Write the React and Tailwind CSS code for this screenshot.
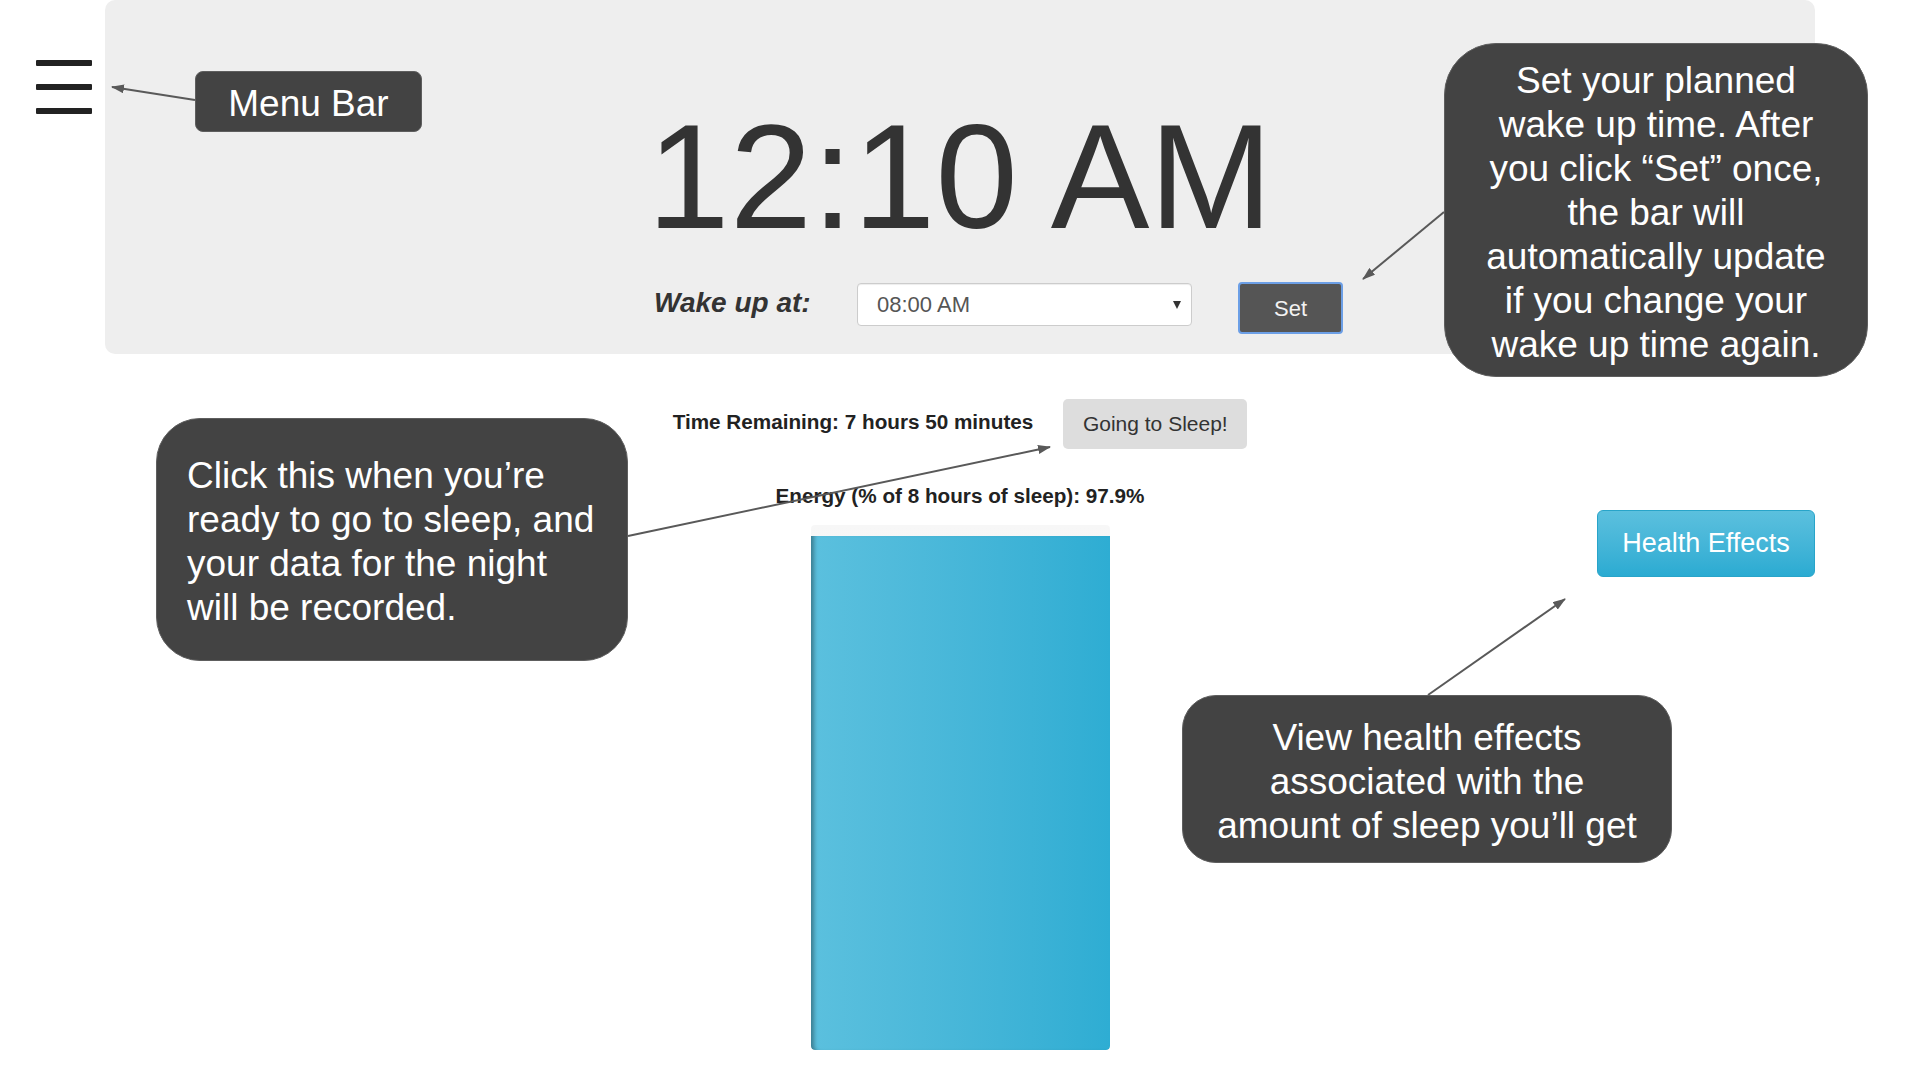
import React from 'react';

const energy = 97.9;

const Callout = ({ className, children }) => (
  <div
    className={`absolute flex items-center border-[1.5px] border-[#5e5e5e] bg-[#434343] pt-[5px] text-[37px] leading-[44px] text-white ${className}`}
  >
    {children}
  </div>
);

const Arrows = () => (
  <svg className="pointer-events-none absolute inset-0" width="1920" height="1080">
    <defs>
      <marker id="head" markerWidth="13" markerHeight="9" refX="12" refY="4.5" orient="auto" markerUnits="userSpaceOnUse">
        <path d="M0,0 L13,4.5 L0,9 z" fill="#595959" />
      </marker>
    </defs>
    <g stroke="#595959" strokeWidth="2" fill="none" markerEnd="url(#head)">
      <line x1="195" y1="100" x2="112" y2="87" />
      <line x1="1444" y1="212" x2="1363" y2="279" />
      <line x1="628" y1="536" x2="1050" y2="447" />
      <line x1="1428" y1="695" x2="1565" y2="599" />
    </g>
  </svg>
);

export default function App() {
  return (
    <div className="relative h-[1080px] w-[1920px] overflow-hidden bg-white font-['Liberation_Sans',Arial,sans-serif]">
      {/* top: menu icon + clock panel */}
      <div className="flex items-start">
        <div className="ml-[36px] mt-[60px] flex w-[56px] flex-col gap-[18px]">
          <span className="block h-[6px] rounded-[1px] bg-[#222]" />
          <span className="block h-[6px] rounded-[1px] bg-[#222]" />
          <span className="block h-[6px] rounded-[1px] bg-[#222]" />
        </div>

        <div className="ml-[13px] h-[354px] w-[1710px] rounded-[10px] bg-[#eeeeee] pt-[103px]">
          <div className="text-center text-[148px] leading-[148px] text-[#333]">12:10 AM</div>

          <div className="mt-[31px] flex h-[52px] items-start pl-[549px]">
            <span className="mt-[6px] w-[203px] text-[28px] font-bold italic leading-[30px] text-[#333]">Wake up at:</span>
            <div className="mt-[1px] flex h-[43px] w-[335px] items-center justify-between rounded-[4px] border border-[#cccccc] bg-white pl-[19px] pr-[10px] shadow-[inset_0_1px_1px_rgba(0,0,0,0.075)]">
              <span className="text-[22px] text-[#555]">08:00 AM</span>
              <svg width="8" height="8" viewBox="0 0 8 8">
                <path d="M0,0 L8,0 L4,8 z" fill="#333" />
              </svg>
            </div>
            <button className="ml-[46px] h-[52px] w-[105px] rounded-[4px] border-2 border-[#6c9fe6] bg-[#555] text-[22px] text-[#f2f2f2]">
              Set
            </button>
          </div>
        </div>
      </div>

      {/* lower: remaining time, energy bar, health effects */}
      <div className="ml-[105px] grid w-[1710px] grid-cols-[1fr_auto_1fr]">
        <div />
        <div className="flex flex-col items-center">
          <div className="mt-[45px] flex items-center gap-[30px]">
            <span className="mb-[4px] text-[20.7px] font-bold text-[#222]">Time Remaining: 7 hours 50 minutes</span>
            <button className="h-[50px] w-[184px] rounded-[5px] bg-[#dddddd] text-[21px] text-[#333]">Going to Sleep!</button>
          </div>
          <div className="mt-[35px] text-[20.7px] font-bold leading-[24px] text-[#222]">
            Energy (% of 8 hours of sleep): {energy}%
          </div>
          <div className="mt-[17px] flex h-[525px] w-[299px] flex-col justify-end overflow-hidden rounded-[4px] bg-linear-to-b from-[#f7f7f7] to-[#e6e6e6]">
            <div
              className="w-full rounded-b-[4px] bg-linear-to-r from-[#5bc0de] to-[#2eadd3] shadow-[inset_6px_0_4px_-3px_rgba(0,0,0,0.35)]"
              style={{ height: `${energy}%` }}
            />
          </div>
        </div>
        <div className="justify-self-end">
          <button className="mt-[156px] h-[67px] w-[218px] rounded-[6px] border border-[#28a4c9] bg-linear-to-b from-[#5bc0de] to-[#2aabd2] text-[27px] text-white">
            Health Effects
          </button>
        </div>
      </div>

      {/* annotation callouts */}
      <Callout className="left-[195px] top-[71px] h-[61px] w-[227px] justify-center rounded-[8px]">Menu Bar</Callout>
      <Callout className="left-[1444px] top-[43px] h-[334px] w-[424px] justify-center rounded-[52px] text-center">
        <p>
          Set your planned
          <br />
          wake up time. After
          <br />
          you click “Set” once,
          <br />
          the bar will
          <br />
          automatically update
          <br />
          if you change your
          <br />
          wake up time again.
        </p>
      </Callout>
      <Callout className="left-[156px] top-[418px] h-[243px] w-[472px] rounded-[44px] pl-[30px]">
        <p>
          Click this when you’re
          <br />
          ready to go to sleep, and
          <br />
          your data for the night
          <br />
          will be recorded.
        </p>
      </Callout>
      <Callout className="left-[1182px] top-[695px] h-[168px] w-[490px] justify-center rounded-[34px] text-center">
        <p>
          View health effects
          <br />
          associated with the
          <br />
          amount of sleep you’ll get
        </p>
      </Callout>

      <Arrows />
    </div>
  );
}
